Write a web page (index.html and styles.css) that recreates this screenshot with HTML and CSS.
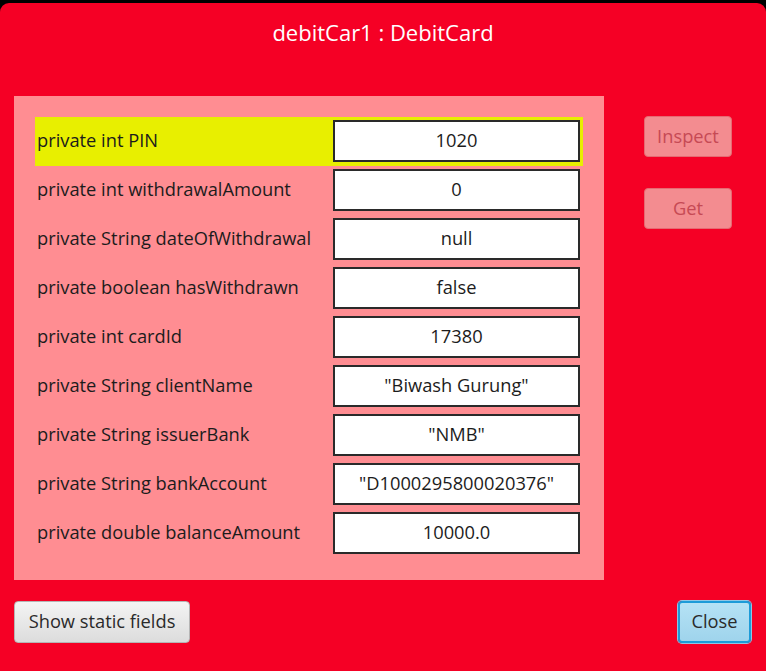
FILE: index.html
```html
<!DOCTYPE html>
<html>
<head>
<meta charset="utf-8">
<link rel="stylesheet" href="styles.css">
</head>
<body>
<div class="window">
  <div class="title">debitCar1 : DebitCard</div>
  <div class="main">
    <div class="panel">
      <div class="row selected"><span class="label">private int PIN</span><span class="value">1020</span></div>
      <div class="row"><span class="label">private int withdrawalAmount</span><span class="value">0</span></div>
      <div class="row"><span class="label">private String dateOfWithdrawal</span><span class="value">null</span></div>
      <div class="row"><span class="label">private boolean hasWithdrawn</span><span class="value">false</span></div>
      <div class="row"><span class="label">private int cardId</span><span class="value">17380</span></div>
      <div class="row"><span class="label">private String clientName</span><span class="value">"Biwash Gurung"</span></div>
      <div class="row"><span class="label">private String issuerBank</span><span class="value">"NMB"</span></div>
      <div class="row"><span class="label">private String bankAccount</span><span class="value">"D1000295800020376"</span></div>
      <div class="row"><span class="label">private double balanceAmount</span><span class="value">10000.0</span></div>
    </div>
    <div class="side">
      <button class="btn disabled">Inspect</button>
      <button class="btn disabled">Get</button>
    </div>
  </div>
  <div class="bottom">
    <button class="btn static">Show static fields</button>
    <button class="btn close">Close</button>
  </div>
</div>
</body>
</html>
```
FILE: styles.css
```css
html, body {
  margin: 0;
  padding: 0;
  background: #000;
  width: 766px;
  height: 671px;
  overflow: hidden;
}
.window {
  margin-top: 3px;
  height: 668px;
  background: #f50025;
  border-radius: 9px 9px 0 0;
  font-family: "Open Sans", "Noto Sans", sans-serif;
  box-sizing: border-box;
  padding: 0 14px 0 14px;
  position: relative;
}
.title {
  height: 93px;
  box-sizing: border-box;
  padding-top: 14px;
  text-align: center;
  color: #fff;
  font-size: 22px;
}
.main {
  display: flex;
  align-items: flex-start;
}
.panel {
  width: 590px;
  height: 484px;
  box-sizing: border-box;
  background: #ff8d92;
  padding: 21px 0 0 21px;
}
.row {
  width: 548px;
  height: 49px;
  box-sizing: border-box;
  padding: 3px 3px 4px 2px;
  display: flex;
  align-items: center;
  justify-content: space-between;
}
.row.selected {
  background: #e8ef00;
}
.label {
  font-size: 18.3px;
  color: #1c1c1c;
  padding-bottom: 3px;
}
.value {
  width: 247px;
  height: 42px;
  box-sizing: border-box;
  border: 2px solid #2a2a2a;
  background: #fff;
  display: flex;
  align-items: center;
  justify-content: center;
  font-size: 18.3px;
  color: #1c1c1c;
  padding-bottom: 3px;
}
.side {
  display: flex;
  flex-direction: column;
  gap: 31px;
  padding: 20px 0 0 40px;
}
.btn {
  font-family: "Open Sans", "Noto Sans", sans-serif;
  font-size: 18.3px;
  box-sizing: border-box;
  height: 42px;
  border-radius: 4px;
  padding: 0 0 3px 0;
  cursor: default;
}
.btn.disabled {
  width: 88px;
  height: 41px;
  background: #f38c90;
  border: 1px solid #e66a72;
  color: #c64a55;
}
.bottom {
  display: flex;
  justify-content: space-between;
  align-items: center;
  padding-top: 21px;
  padding-right: 1px;
}
.btn.static {
  width: 176px;
  background: linear-gradient(#f4f4f4, #dcdcdc);
  border: 1px solid #b5b5b5;
  color: #2a2a2a;
}
.btn.close {
  width: 73px;
  background: linear-gradient(#b5e2f5, #9fd4ec);
  border: 2px solid #1d9bd8;
  box-shadow: 0 0 0 1px #8fc6e4;
  color: #2a2a2a;
}
```
